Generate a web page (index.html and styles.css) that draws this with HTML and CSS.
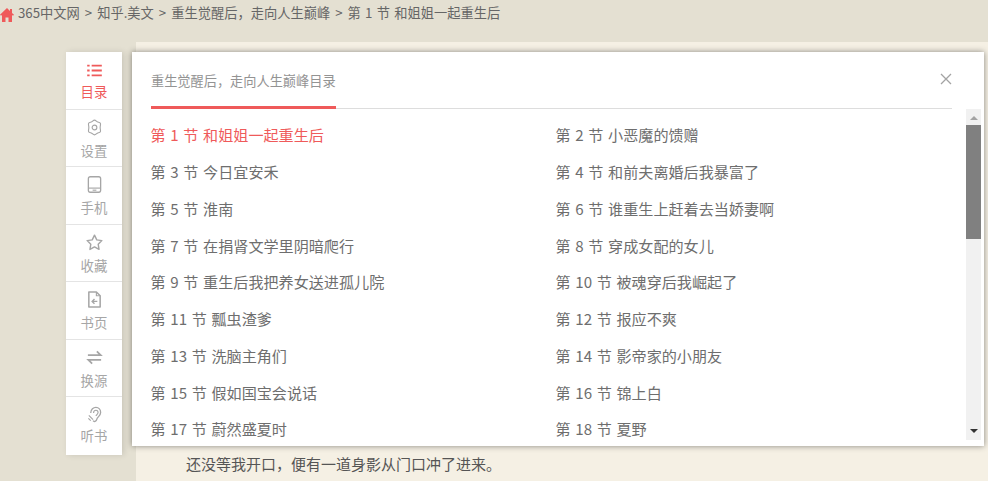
FILE: index.html
```html
<!DOCTYPE html>
<html lang="zh">
<head>
<meta charset="utf-8">
<title>目录</title>
<link rel="stylesheet" href="styles.css">
</head>
<body>
<nav class="crumbs">
  <svg class="home" viewBox="0 0 14 14"><path d="M7 0 0 6.800 1 7.800 2 7V14H5.500V9.500H8.500V14H12V7L13 7.800 14 6.800 12 4.900V1H10V3Z"/></svg>
  <span>365中文网</span><span class="sep">&gt;</span><span>知乎.美文</span><span class="sep">&gt;</span><span>重生觉醒后，走向人生巅峰</span><span class="sep">&gt;</span><span class="crumb-last">第 1 节 和姐姐一起重生后</span>
</nav>
<main class="page">
  <p class="para">还没等我开口，便有一道身影从门口冲了进来。</p>
</main>

<aside class="side">
  <a class="tool active">
    <svg viewBox="0 0 18 16" class="ico ico-list"><path d="M0 2H3M5.500 2H18M0 8H3M5.500 8H18M0 14H3M5.500 14H18" fill="none" stroke="currentColor" stroke-width="2.400"/></svg>
    <span>目录</span>
  </a>
  <a class="tool">
    <svg viewBox="0 0 18 18" class="ico"><path d="M9 1.200C10.300 1.200 11 2.500 12 3 13 3.500 14.600 3.400 15.200 4.500 15.800 5.600 15 6.800 15 8.900 15 11 15.800 12.400 15.200 13.500 14.600 14.600 13 14.500 12 15 11 15.500 10.300 16.800 9 16.800 7.700 16.800 7 15.500 6 15 5 14.500 3.400 14.600 2.800 13.500 2.200 12.400 3 11 3 8.900 3 6.800 2.200 5.600 2.800 4.500 3.400 3.400 5 3.500 6 3 7 2.500 7.700 1.200 9 1.200Z" fill="none" stroke="currentColor" stroke-width="1.200"/><circle cx="9" cy="9" r="2.500" fill="none" stroke="currentColor" stroke-width="1.200"/></svg>
    <span>设置</span>
  </a>
  <a class="tool">
    <svg viewBox="0 0 18 18" class="ico"><rect x="2.500" y="0.800" width="13" height="16.400" rx="2" fill="none" stroke="currentColor" stroke-width="1.400"/><path d="M2.500 12.800H15.500" stroke="currentColor" stroke-width="1.200"/><path d="M7 15H11" stroke="currentColor" stroke-width="1.200"/></svg>
    <span>手机</span>
  </a>
  <a class="tool">
    <svg viewBox="0 0 18 18" class="ico"><path d="M9 1.200 11.400 6.200 16.800 7 12.900 10.800 13.800 16.300 9 13.700 4.200 16.300 5.100 10.800 1.200 7 6.600 6.200Z" fill="none" stroke="currentColor" stroke-width="1.500" stroke-linejoin="round"/></svg>
    <span>收藏</span>
  </a>
  <a class="tool">
    <svg viewBox="0 0 18 18" class="ico"><path d="M3 1H11L15 5V17H3Z" fill="none" stroke="currentColor" stroke-width="1.600" stroke-linejoin="round"/><path d="M11 1V5H15" fill="none" stroke="currentColor" stroke-width="1.200"/><path d="M12 11H7M9 8.500 6.500 11 9 13.500" fill="none" stroke="currentColor" stroke-width="1.500"/></svg>
    <span>书页</span>
  </a>
  <a class="tool">
    <svg viewBox="0 0 18 18" class="ico"><path d="M2 6.500H15.500L11.500 2.500M16 11.500H2.500L6.500 15.500" fill="none" stroke="currentColor" stroke-width="1.900"/></svg>
    <span>换源</span>
  </a>
  <a class="tool last">
    <svg viewBox="0 0 18 18" class="ico"><path d="M5 7.500C5 3.500 8 1.500 10.500 1.500 13.500 1.500 15.500 4 15.500 7 15.500 10.500 12 11.500 11.500 14 11 16.500 8.500 17 7.500 15.500" fill="none" stroke="currentColor" stroke-width="1.400"/><path d="M8 7.500C8 5.500 9.300 4.500 10.500 4.500 12 4.500 12.800 5.800 12.800 7 12.800 8.500 11 9.200 10.500 10.500" fill="none" stroke="currentColor" stroke-width="1.200"/><path d="M3 10 7.500 14.500M2.500 13 5 15.500" fill="none" stroke="currentColor" stroke-width="1.200"/></svg>
    <span>听书</span>
  </a>
</aside>

<section class="panel">
  <header class="panel-head">
    <h2 class="panel-title">重生觉醒后，走向人生巅峰目录</h2>
    <svg class="close" viewBox="0 0 12 12"><path d="M1 1 11 11M11 1 1 11" fill="none" stroke="currentColor" stroke-width="1.300"/></svg>
  </header>
  <div class="panel-body">
    <ul class="chapters">
      <li class="current">第 1 节 和姐姐一起重生后</li>
      <li>第 2 节 小恶魔的馈赠</li>
      <li>第 3 节 今日宜安禾</li>
      <li>第 4 节 和前夫离婚后我暴富了</li>
      <li>第 5 节 淮南</li>
      <li>第 6 节 谁重生上赶着去当娇妻啊</li>
      <li>第 7 节 在捐肾文学里阴暗爬行</li>
      <li>第 8 节 穿成女配的女儿</li>
      <li>第 9 节 重生后我把养女送进孤儿院</li>
      <li>第 10 节 被魂穿后我崛起了</li>
      <li>第 11 节 瓢虫渣爹</li>
      <li>第 12 节 报应不爽</li>
      <li>第 13 节 洗脑主角们</li>
      <li>第 14 节 影帝家的小朋友</li>
      <li>第 15 节 假如国宝会说话</li>
      <li>第 16 节 锦上白</li>
      <li>第 17 节 蔚然盛夏时</li>
      <li>第 18 节 夏野</li>
    </ul>
    <div class="scrollbar">
      <span class="arrow up"></span>
      <span class="track"><span class="thumb"></span></span>
      <span class="arrow down"></span>
    </div>
  </div>
</section>
</body>
</html>
```
FILE: styles.css
```css
* { box-sizing: border-box; }
html, body { margin: 0; height: 100%; overflow: hidden; }
body {
  background: #e4e0d2;
  color: #555;
  font-family: "Noto Sans CJK SC", "Noto Sans", sans-serif;
  display: flex;
  flex-direction: column;
}
.crumbs {
  height: 42px;
  padding-top: 3px;
  display: flex;
  align-items: flex-start;
  font-size: 13.250px;
  line-height: 20px;
  color: #666;
  white-space: nowrap;
}
.crumb-last { word-spacing: 1.300px; }
.home { width: 14px; height: 14px; fill: #ef5a5a; margin: 5px 4px 0 0; flex: none; }
.sep { margin: 0 5px; }
.page {
  flex: 1;
  margin-left: 136px;
  background: #f5f0e4;
  padding: 411px 0 0 50px;
  font-size: 15px;
  line-height: 22px;
  color: #555;
}
.para { margin: 0; }
.side {
  position: absolute;
  left: 66px;
  top: 52px;
  width: 56px;
  background: #fff;
  box-shadow: 2px 0 6px rgba(0,0,0,.12);
  display: flex;
  flex-direction: column;
}
.tool {
  height: 57.500px;
  display: flex;
  flex-direction: column;
  align-items: center;
  padding-top: 9px;
  font-size: 13.400px;
  line-height: 18px;
  color: #a6a6a6;
  border-bottom: 1px solid #e4e4e4;
}
.tool.last { border-bottom: 0; }
.tool.active { color: #ef5a5a; padding-top: 12px; }
.ico { width: 17px; height: 17px; margin-bottom: 5px; flex: none; }
.tool.last .ico { margin-bottom: 3px; }
.ico-list { width: 15px; height: 13px; }
.panel {
  position: absolute;
  left: 132px;
  top: 52px;
  width: 852px;
  height: 394px;
  background: #fff;
  box-shadow: 0 0 6px rgba(0,0,0,.45);
  display: flex;
  flex-direction: column;
}
.panel-head {
  height: 57px;
  margin: 0 32px 0 19px;
  border-bottom: 1px solid #ddd;
  display: flex;
  justify-content: space-between;
  align-items: flex-start;
  flex: none;
}
.panel-title {
  margin: 0;
  height: 57px;
  padding-top: 18px;
  line-height: 22px;
  font-size: 13.200px;
  font-weight: 400;
  color: #939393;
  border-bottom: 3px solid #ef5a5a;
}
.close { width: 12px; height: 12px; color: #a3a3a3; margin: 21px 0 0 0; }
.panel-body { flex: 1; display: flex; min-height: 0; padding-left: 18.500px; }
.chapters {
  list-style: none;
  margin: 0;
  padding: 7px 0 0;
  width: 815.500px;
  display: grid;
  grid-template-columns: 405px 405px;
  grid-auto-rows: 36.750px;
  align-items: center;
  font-size: 15.100px;
  word-spacing: 1.300px;
  color: #6e6e6e;
  white-space: nowrap;
  overflow: hidden;
}
.chapters .current { color: #ef5a5a; }
.scrollbar {
  width: 15px;
  height: 331px;
  background: #f1f1f1;
  display: flex;
  flex-direction: column;
  align-items: center;
  flex: none;
}
.track { flex: 1; width: 100%; display: block; }
.thumb { display: block; width: 100%; height: 114px; background: #808080; }
.arrow { width: 0; height: 0; border-left: 4px solid transparent; border-right: 4px solid transparent; flex: none; }
.arrow.up { border-bottom: 4px solid #a3a3a3; margin: 7px 0 5px; }
.arrow.down { border-top: 4px solid #333; margin: 5px 0 7px; }
```
